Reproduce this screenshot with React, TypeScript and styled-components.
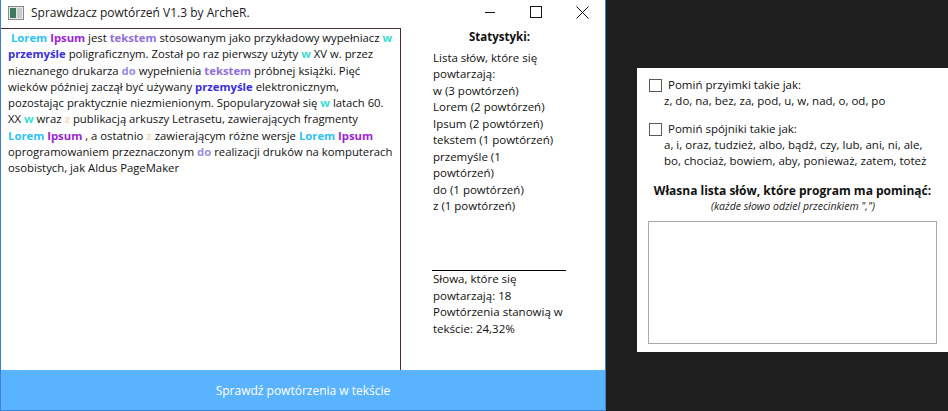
import React from "react";
import styled, { createGlobalStyle } from "styled-components";

const GlobalStyle = createGlobalStyle`
  html, body {
    margin: 0;
    padding: 0;
    background: #1f1f1f;
    font-family: "Open Sans", "Noto Sans", sans-serif;
  }
`;

type Tone = "lorem" | "ipsum" | "tekstem" | "przemysle" | "w" | "do" | "z";

const toneColors: Record<Tone, string> = {
  lorem: "#2ec4f2",
  ipsum: "#9c1fd6",
  tekstem: "#9070dc",
  przemysle: "#3a2fdc",
  w: "#38e0cf",
  do: "#9a8ce2",
  z: "#f3dcc0",
};

function App() {
  return (
    <>
      <GlobalStyle />
      <Screen>
        <Window>
          <TitleBar>
            <AppIcon width="16" height="14" viewBox="0 0 16 14">
              <rect x="0.5" y="0.5" width="15" height="13" fill="#e8e8e8" stroke="#8a8a8a" />
              <rect x="2" y="2" width="6" height="10" fill="#3f7a5a" />
              <rect x="9" y="2" width="5" height="10" fill="#c9c9c9" />
            </AppIcon>
            <Title>Sprawdzacz powtórzeń V1.3 by ArcheR.</Title>
            <Controls>
              <CtrlButton>
                <svg width="12" height="12" viewBox="0 0 12 12">
                  <line x1="1" y1="6.5" x2="11" y2="6.5" stroke="#111" strokeWidth="1" />
                </svg>
              </CtrlButton>
              <CtrlButton>
                <svg width="12" height="12" viewBox="0 0 12 12">
                  <rect x="0.5" y="0.5" width="11" height="11" fill="none" stroke="#111" strokeWidth="1" />
                </svg>
              </CtrlButton>
              <CtrlButton>
                <svg width="13" height="13" viewBox="0 0 13 13">
                  <path d="M0.5 0.5 L12.5 12.5 M12.5 0.5 L0.5 12.5" stroke="#111" strokeWidth="1" />
                </svg>
              </CtrlButton>
            </Controls>
          </TitleBar>

          <Body>
            <Editor>
              <Line>
                {" "}<W t="lorem">Lorem</W> <W t="ipsum">Ipsum</W> jest <W t="tekstem">tekstem</W> stosowanym jako przykładowy wypełniacz <W t="w">w</W>
              </Line>
              <Line>
                <W t="przemysle">przemyśle</W> poligraficznym. Został po raz pierwszy użyty <W t="w">w</W> XV w. przez
              </Line>
              <Line>
                nieznanego drukarza <W t="do">do</W> wypełnienia <W t="tekstem">tekstem</W> próbnej książki. Pięć
              </Line>
              <Line>
                wieków później zaczął być używany <W t="przemysle">przemyśle</W> elektronicznym,
              </Line>
              <Line>pozostając praktycznie niezmienionym. Spopularyzował się <W t="w">w</W> latach 60.</Line>
              <Line>
                XX <W t="w">w</W> wraz <W t="z">z</W> publikacją arkuszy Letrasetu, zawierających fragmenty
              </Line>
              <Line>
                <W t="lorem">Lorem</W> <W t="ipsum">Ipsum</W> , a ostatnio <W t="z">z</W> zawierającym różne wersje <W t="lorem">Lorem</W> <W t="ipsum">Ipsum</W>
              </Line>
              <Line>
                oprogramowaniem przeznaczonym <W t="do">do</W> realizacji druków na komputerach
              </Line>
              <Line>osobistych, jak Aldus PageMaker</Line>
            </Editor>

            <Stats>
              <StatsTitle>Statystyki:</StatsTitle>
              <StatsList>
                <Line>Lista słów, które się</Line>
                <Line>powtarzają:</Line>
                <Line>w (3 powtórzeń)</Line>
                <Line>Lorem (2 powtórzeń)</Line>
                <Line>Ipsum (2 powtórzeń)</Line>
                <Line>tekstem (1 powtórzeń)</Line>
                <Line>przemyśle (1</Line>
                <Line>powtórzeń)</Line>
                <Line>do (1 powtórzeń)</Line>
                <Line>z (1 powtórzeń)</Line>
              </StatsList>
              <Summary>
                <Line>Słowa, które się</Line>
                <Line>powtarzają: 18</Line>
                <Line>Powtórzenia stanowią w</Line>
                <Line>tekście: 24,32%</Line>
              </Summary>
            </Stats>
          </Body>

          <CheckButton>Sprawdź powtórzenia w tekście</CheckButton>
        </Window>

        <Side>
          <OptionsPanel>
            <Option>
              <Box />
              <OptionText>
                <OptionLabel>Pomiń przyimki takie jak:</OptionLabel>
                <OptionWords>z, do, na, bez, za, pod, u, w, nad, o, od, po</OptionWords>
              </OptionText>
            </Option>
            <Option>
              <Box />
              <OptionText>
                <OptionLabel>Pomiń spójniki takie jak:</OptionLabel>
                <OptionWords>
                  a, i, oraz, tudzież, albo, bądź, czy, lub, ani, ni, ale,
                  <br />
                  bo, chociaż, bowiem, aby, ponieważ, zatem, toteż
                </OptionWords>
              </OptionText>
            </Option>
            <OwnTitle>Własna lista słów, które program ma pominąć:</OwnTitle>
            <OwnHint>(każde słowo odziel przecinkiem ",")</OwnHint>
            <OwnInput />
          </OptionsPanel>
        </Side>
      </Screen>
    </>
  );
}

function W({ t, children }: { t: Tone; children: React.ReactNode }) {
  return <Word $color={toneColors[t]}>{children}</Word>;
}

const Screen = styled.div`
  display: flex;
  width: 948px;
  height: 411px;
  overflow: hidden;
`;

const Window = styled.div`
  width: 604px;
  height: 410px;
  flex-shrink: 0;
  display: flex;
  flex-direction: column;
  background: #ffffff;
  border-left: 1px solid #3c80d8;
  border-right: 1px solid #3c80d8;
  border-bottom: 1px solid #3c80d8;
  color: #111;
  font-size: 11.5px;
`;

const TitleBar = styled.div`
  height: 28px;
  display: flex;
  align-items: center;
  padding-left: 7px;
  box-sizing: border-box;
`;

const AppIcon = styled.svg`
  margin-right: 7px;
  margin-top: -2px;
`;

const Title = styled.div`
  font-size: 12px;
  color: #1a1a1a;
  margin-top: -3px;
`;

const Controls = styled.div`
  margin-left: auto;
  display: flex;
  height: 28px;
`;

const CtrlButton = styled.div`
  width: 46px;
  display: flex;
  align-items: center;
  justify-content: center;
  padding-bottom: 4px;
`;

const Body = styled.div`
  flex: 1;
  display: flex;
`;

const Editor = styled.div`
  width: 392px;
  border-top: 1px solid #4d2c2c;
  border-right: 1px solid #4d2c2c;
  padding: 1px 0 0 7px;
  font-size: 11.3px;
  line-height: 16.25px;
`;

const Line = styled.div`
  white-space: pre;
`;

const Word = styled.span<{ $color: string }>`
  color: ${(p) => p.$color};
  font-weight: 700;
`;

const Stats = styled.div`
  flex: 1;
  display: flex;
  flex-direction: column;
  padding: 1px 0 0 32px;
  line-height: 16.5px;
`;

const StatsTitle = styled.div`
  width: 133px;
  text-align: center;
  font-weight: 700;
  margin-bottom: 4px;
`;

const StatsList = styled.div`
  flex: 1;
`;

const Summary = styled.div`
  width: 133px;
  border-top: 1px solid #000;
  margin-left: -1px;
  padding: 0 0 33px 1px;
`;

const CheckButton = styled.div`
  height: 40px;
  display: flex;
  align-items: center;
  justify-content: center;
  background: #5ab3ff;
  color: #ffffff;
  font-size: 12px;
`;

const Side = styled.div`
  flex: 1;
  padding: 68px 0 0 31px;
`;

const OptionsPanel = styled.div`
  height: 284px;
  background: #ffffff;
  box-sizing: border-box;
  padding: 11px 11px 0 12px;
  display: flex;
  flex-direction: column;
  color: #111;
  font-size: 11.5px;
  line-height: 16px;
`;

const Option = styled.div`
  display: flex;
  align-items: flex-start;
  margin-bottom: 14px;

  &:last-of-type {
    margin-bottom: 9px;
  }
`;

const Box = styled.div`
  width: 11px;
  height: 11px;
  border: 1px solid #5a5a5a;
  margin-right: 6px;
  flex-shrink: 0;
`;

const OptionText = styled.div`
  margin-top: -2px;
`;

const OptionLabel = styled.div``;

const OptionWords = styled.div`
  margin-left: -4px;
`;

const OwnTitle = styled.div`
  text-align: center;
  font-weight: 700;
  font-size: 12px;
  margin-left: -1px;
`;

const OwnHint = styled.div`
  text-align: center;
  font-style: italic;
  font-size: 10.5px;
  line-height: 14px;
  color: #222;
`;

const OwnInput = styled.div`
  margin: 8px 0 0 -1px;
  height: 121px;
  border: 1px solid #a8a8ae;
`;

export default App;
